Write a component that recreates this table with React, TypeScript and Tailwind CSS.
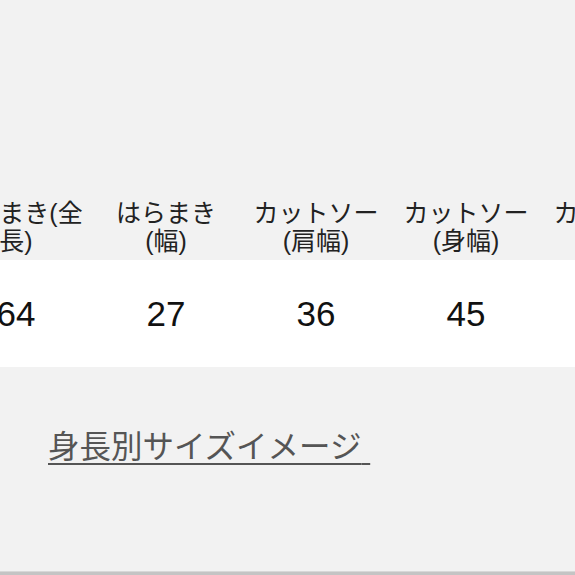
const headers = [
  "はらまき(全長)",
  "はらまき(幅)",
  "カットソー(肩幅)",
  "カットソー(身幅)",
  "カットソー(着丈)",
];
const values = ["64", "27", "36", "45", "60"];

const font = { fontFamily: '"Liberation Sans", "Noto Sans CJK JP", sans-serif' };

export default function App() {
  return (
    <div
      className="flex h-[575px] w-[575px] flex-col overflow-hidden bg-[#f2f2f2]"
      style={font}
    >
      {/* header row */}
      <div className="-ml-[59px] flex pt-[199px]">
        {headers.map((h) => (
          <div
            key={h}
            className="w-[150px] shrink-0 px-[8px] text-center text-[25px] leading-[28px] text-[#222]"
          >
            {h}
          </div>
        ))}
      </div>

      {/* value row */}
      <div className="mt-[5px] h-[107px] shrink-0 bg-white">
        <div className="-ml-[59px] flex h-full items-center">
          {values.map((v, i) => (
            <div
              key={i}
              className="w-[150px] shrink-0 text-center text-[35px] leading-none text-[#111]"
            >
              {v}
            </div>
          ))}
        </div>
      </div>

      {/* size image link */}
      <div className="mt-[60px] pl-[48px]">
        <a className="text-[31.5px] leading-[40px] text-[#555] underline decoration-2 underline-offset-[5px]">
          身長別サイズイメージ{"\u00a0"}
        </a>
      </div>

      <div className="flex-1" />
      <div className="h-[4px] shrink-0 border-t border-[#d8d8d8] bg-[#c4c4c4]" />
    </div>
  );
}
